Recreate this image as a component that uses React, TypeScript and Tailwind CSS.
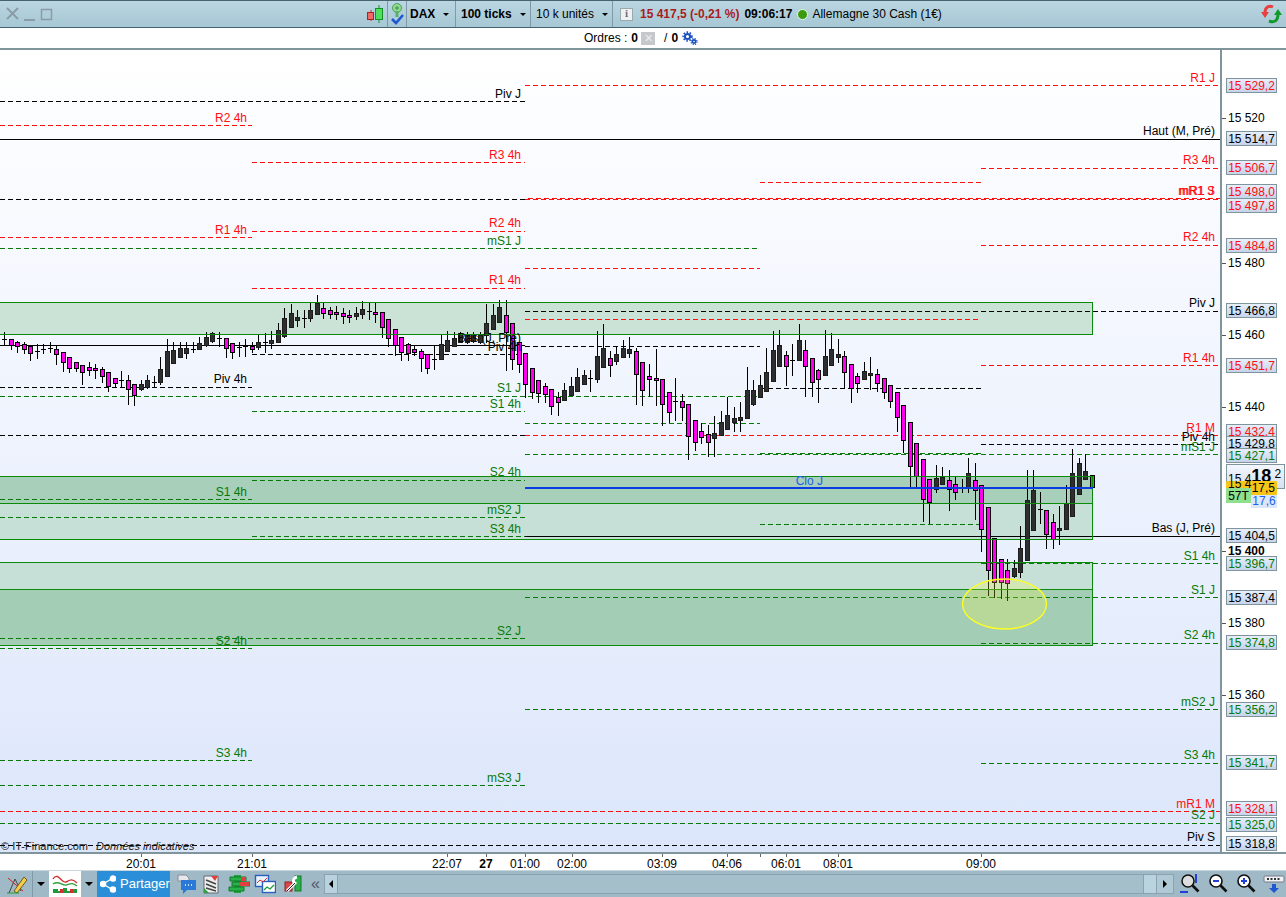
import type { ReactNode } from "react";

const RED = "#ff0f0f";
const GREEN = "#067a06";
const BLACK = "#000000";

// x1, x2, y, colour (page coordinates, the svg viewBox starts at y=50)
const dashed: [number, number, number, string][] = [
  [525, 1221, 85, RED],
  [0, 525, 101, BLACK],
  [0, 252, 125, RED],
  [252, 525, 162, RED],
  [981, 1221, 168, RED],
  [760, 981, 182, RED],
  [0, 525, 199, BLACK],
  [528, 1221, 198, RED],
  [525, 1221, 199, RED],
  [252, 525, 231, RED],
  [0, 252, 237, RED],
  [981, 1221, 245, RED],
  [0, 760, 248, GREEN],
  [525, 760, 268, RED],
  [252, 525, 288, RED],
  [525, 1221, 311, BLACK],
  [525, 981, 319, RED],
  [525, 760, 346, BLACK],
  [252, 525, 354, BLACK],
  [981, 1221, 365, RED],
  [0, 252, 387, BLACK],
  [760, 981, 388, BLACK],
  [0, 760, 396, GREEN],
  [252, 525, 411, GREEN],
  [525, 760, 423, GREEN],
  [0, 525, 435, BLACK],
  [525, 1221, 435, RED],
  [981, 1221, 444, BLACK],
  [525, 1221, 454, GREEN],
  [760, 981, 453, GREEN],
  [252, 525, 480, GREEN],
  [0, 252, 499, GREEN],
  [0, 525, 517, GREEN],
  [760, 981, 524, GREEN],
  [252, 525, 536, GREEN],
  [981, 1221, 563, GREEN],
  [760, 981, 589, GREEN],
  [525, 1221, 597, GREEN],
  [0, 525, 638, GREEN],
  [981, 1221, 643, GREEN],
  [0, 252, 648, GREEN],
  [525, 1221, 709, GREEN],
  [0, 252, 760, GREEN],
  [981, 1221, 763, GREEN],
  [0, 525, 785, GREEN],
  [0, 1221, 811, RED],
  [0, 1221, 823, GREEN],
  [0, 1221, 845, BLACK],
];

// right edge, baseline, text, colour
const labels: [number, number, string, string][] = [
  [521, 98, "Piv J", BLACK],
  [1215, 82, "R1 J", RED],
  [247, 122, "R2 4h", RED],
  [1215, 135, "Haut (M, Pré)", BLACK],
  [521, 159, "R3 4h", RED],
  [1215, 164, "R3 4h", RED],
  [1215, 195, "mR1 S", RED],
  [1214, 195, "mR1 J", RED],
  [521, 227, "R2 4h", RED],
  [247, 234, "R1 4h", RED],
  [521, 245, "mS1 J", GREEN],
  [1215, 241, "R2 4h", RED],
  [521, 284, "R1 4h", RED],
  [1215, 307, "Piv J", BLACK],
  [521, 342, "Bas (J, Pré)", BLACK],
  [521, 351, "Piv 4h", BLACK],
  [1215, 362, "R1 4h", RED],
  [247, 383, "Piv 4h", BLACK],
  [521, 392, "S1 J", GREEN],
  [521, 408, "S1 4h", GREEN],
  [1215, 432, "R1 M", RED],
  [1215, 441, "Piv 4h", BLACK],
  [1215, 451, "mS1 J", GREEN],
  [521, 476, "S2 4h", GREEN],
  [247, 496, "S1 4h", GREEN],
  [823, 485, "Clo J", "#2060e8"],
  [521, 514, "mS2 J", GREEN],
  [521, 533, "S3 4h", GREEN],
  [1215, 532, "Bas (J, Pré)", BLACK],
  [1215, 560, "S1 4h", GREEN],
  [1215, 594, "S1 J", GREEN],
  [521, 635, "S2 J", GREEN],
  [1215, 639, "S2 4h", GREEN],
  [247, 645, "S2 4h", GREEN],
  [1215, 706, "mS2 J", GREEN],
  [247, 757, "S3 4h", GREEN],
  [1215, 759, "S3 4h", GREEN],
  [521, 782, "mS3 J", GREEN],
  [1215, 808, "mR1 M", RED],
  [1215, 819, "S2 J", GREEN],
  [1215, 841, "Piv S", BLACK],
];

// high, body top, body bottom, low, m = magenta / k = black / d = doji
const candles: [number, number, number, number, string][] = [
  [332, 339, 340, 346, "d"], [339, 339, 345, 350, "m"], [341, 342, 346, 353, "m"], [342, 344, 349, 354, "m"],
  [346, 346, 353, 361, "m"], [344, 351, 352, 359, "d"], [344, 349, 350, 354, "d"], [342, 348, 349, 353, "d"],
  [346, 349, 354, 365, "m"], [352, 352, 362, 372, "m"], [357, 357, 368, 373, "m"], [362, 362, 368, 372, "m"],
  [365, 365, 372, 385, "m"], [362, 367, 370, 376, "m"], [364, 368, 370, 379, "m"], [367, 369, 376, 383, "m"],
  [372, 372, 386, 392, "m"], [378, 378, 383, 387, "m"], [371, 380, 381, 387, "d"], [375, 380, 389, 405, "m"],
  [384, 384, 395, 406, "m"], [380, 384, 389, 391, "k"], [375, 380, 387, 389, "k"], [376, 382, 383, 388, "d"],
  [357, 369, 382, 385, "k"], [339, 351, 376, 377, "k"], [342, 350, 363, 364, "k"], [342, 348, 357, 358, "k"],
  [342, 348, 353, 359, "k"], [342, 349, 350, 353, "d"], [337, 343, 349, 350, "k"], [332, 337, 345, 347, "k"],
  [332, 333, 341, 343, "k"], [332, 338, 339, 347, "d"], [338, 338, 348, 358, "m"], [343, 343, 352, 359, "m"],
  [342, 347, 348, 357, "d"], [339, 346, 347, 357, "d"], [342, 346, 349, 353, "m"], [335, 342, 347, 350, "k"],
  [333, 342, 343, 353, "d"], [331, 340, 343, 349, "k"], [323, 330, 342, 343, "k"], [308, 318, 336, 338, "k"],
  [304, 313, 327, 328, "k"], [310, 317, 320, 327, "k"], [310, 318, 319, 328, "d"], [302, 310, 318, 322, "k"],
  [295, 303, 314, 315, "k"], [303, 308, 313, 319, "m"], [307, 310, 314, 319, "m"], [306, 312, 314, 320, "m"],
  [308, 313, 316, 324, "m"], [310, 315, 317, 323, "m"], [307, 313, 316, 320, "k"], [301, 309, 314, 319, "k"],
  [303, 311, 312, 320, "d"], [303, 312, 314, 323, "m"], [312, 312, 327, 338, "m"], [319, 319, 338, 347, "m"],
  [329, 329, 345, 356, "m"], [337, 337, 352, 361, "m"], [343, 344, 353, 361, "m"], [345, 349, 352, 356, "m"],
  [349, 351, 358, 372, "m"], [354, 354, 368, 374, "m"], [345, 359, 360, 370, "d"], [335, 344, 359, 360, "k"],
  [331, 340, 351, 352, "k"], [332, 338, 346, 347, "k"], [332, 333, 342, 343, "k"], [332, 335, 342, 344, "k"],
  [332, 334, 341, 343, "k"], [332, 335, 342, 344, "k"], [304, 323, 335, 343, "k"], [304, 315, 329, 330, "k"],
  [300, 307, 322, 323, "k"], [300, 315, 332, 371, "m"], [323, 323, 359, 370, "m"], [342, 342, 364, 373, "m"],
  [353, 353, 384, 398, "m"], [368, 368, 392, 399, "m"], [380, 380, 393, 403, "m"], [383, 386, 394, 403, "m"],
  [389, 389, 406, 415, "m"], [392, 397, 402, 416, "m"], [383, 390, 400, 401, "k"], [377, 386, 395, 396, "k"],
  [368, 377, 391, 392, "k"], [370, 375, 384, 385, "k"], [370, 378, 379, 392, "d"], [331, 356, 379, 383, "k"],
  [324, 348, 367, 368, "k"], [351, 358, 365, 377, "m"], [346, 354, 361, 365, "k"], [340, 348, 357, 358, "k"],
  [337, 349, 353, 358, "k"], [348, 351, 374, 405, "m"], [362, 362, 390, 406, "m"], [364, 376, 379, 397, "m"],
  [349, 378, 380, 406, "m"], [379, 379, 404, 426, "m"], [392, 392, 412, 423, "m"], [378, 401, 402, 421, "d"],
  [394, 401, 407, 421, "m"], [404, 404, 436, 460, "m"], [420, 420, 442, 451, "m"], [423, 431, 437, 444, "m"],
  [425, 434, 442, 457, "m"], [416, 433, 438, 457, "k"], [411, 422, 435, 436, "k"], [397, 415, 429, 430, "k"],
  [407, 418, 422, 432, "k"], [402, 417, 420, 432, "k"], [367, 390, 418, 419, "k"], [380, 390, 404, 406, "k"],
  [375, 385, 397, 398, "k"], [348, 372, 391, 392, "k"], [331, 350, 381, 382, "k"], [330, 345, 366, 367, "k"],
  [351, 355, 366, 386, "m"], [344, 360, 361, 376, "d"], [324, 340, 360, 361, "k"], [340, 350, 366, 397, "m"],
  [358, 358, 382, 397, "m"], [369, 370, 379, 403, "m"], [330, 356, 375, 376, "k"], [333, 349, 365, 366, "k"],
  [339, 354, 357, 363, "k"], [351, 356, 372, 389, "m"], [364, 364, 388, 403, "m"], [373, 376, 383, 393, "m"],
  [362, 371, 379, 380, "k"], [357, 373, 375, 390, "k"], [369, 374, 383, 392, "m"], [378, 378, 392, 399, "m"],
  [385, 385, 401, 408, "m"], [392, 392, 417, 432, "m"], [405, 405, 440, 453, "m"], [422, 422, 466, 488, "m"],
  [443, 443, 476, 488, "m"], [459, 459, 499, 522, "m"], [479, 479, 502, 524, "m"], [465, 478, 489, 493, "k"],
  [467, 477, 484, 485, "k"], [470, 480, 489, 511, "m"], [477, 484, 492, 500, "m"], [479, 488, 489, 493, "d"],
  [458, 473, 488, 493, "k"], [463, 480, 490, 520, "m"], [485, 485, 529, 552, "m"], [507, 507, 570, 596, "m"],
  [538, 538, 582, 598, "m"], [559, 559, 582, 599, "m"], [559, 570, 583, 601, "m"], [560, 568, 576, 578, "k"],
  [526, 548, 572, 578, "k"], [470, 500, 560, 561, "k"], [470, 490, 530, 531, "k"], [492, 509, 510, 524, "d"],
  [510, 510, 534, 549, "m"], [514, 522, 539, 549, "m"], [506, 528, 530, 545, "k"], [485, 503, 529, 530, "k"],
  [449, 473, 516, 517, "k"], [458, 463, 494, 495, "k"], [454, 471, 479, 480, "k"], [475, 475, 487, 488, "g"],
];

// centre y, text, colour
const tags: [number, string, string][] = [
  [85, "15 529,2", RED],
  [138, "15 514,7", BLACK],
  [167, "15 506,7", RED],
  [191, "15 498,0", RED],
  [205, "15 497,8", RED],
  [245, "15 484,8", RED],
  [310, "15 466,8", BLACK],
  [365, "15 451,7", RED],
  [431, "15 432,4", RED],
  [443, "15 429,8", BLACK],
  [455, "15 427,1", GREEN],
  [535, "15 404,5", BLACK],
  [563, "15 396,7", GREEN],
  [597, "15 387,4", BLACK],
  [642, "15 374,8", GREEN],
  [709, "15 356,2", GREEN],
  [762, "15 341,7", GREEN],
  [808, "15 328,1", RED],
  [824, "15 325,0", GREEN],
  [843, "15 318,8", BLACK],
];

const ticks: [number, string][] = [
  [118, "15 520"],
  [263, "15 480"],
  [335, "15 460"],
  [407, "15 440"],
  [623, "15 380"],
  [695, "15 360"],
];

const times: [number, string, boolean][] = [
  [141, "20:01", false],
  [252, "21:01", false],
  [447, "22:07", false],
  [486, "27", true],
  [525, "01:00", false],
  [572, "02:00", false],
  [662, "03:09", false],
  [727, "04:06", false],
  [760, "", false],
  [786, "06:01", false],
  [838, "08:01", false],
  [981, "09:00", false],
];

function Caret() {
  return <span className="ml-2 h-0 w-0 border-x-[3px] border-t-[3px] border-x-transparent border-t-black" />;
}

function Chart() {
  return (
    <svg viewBox="0 50 1221 802" width={1221} height={802} className="block" fontFamily="'Liberation Sans', Arial, sans-serif" fontSize={12}>
      <g shapeRendering="crispEdges">
        <rect x={0} y={302} width={1092} height={32} fill="#cbe3d6" />
        <rect x={0} y={476} width={1092} height={27} fill="#a7cfb9" />
        <rect x={0} y={503} width={1092} height={37} fill="#c6e0d8" />
        <rect x={0} y={562} width={1092} height={27} fill="#c6e0d8" />
        <rect x={0} y={589} width={1092} height={56} fill="#a3cdb5" />
        {dashed.map(([x1, x2, y, c], i) => (
          <line key={i} x1={x1} x2={x2} y1={y + 0.5} y2={y + 0.5} stroke={c} strokeDasharray="5 3" />
        ))}
        <line x1={0} x2={1221} y1={139.5} y2={139.5} stroke="#000" />
        <line x1={0} x2={525} y1={345.5} y2={345.5} stroke="#000" />
        <line x1={525} x2={1221} y1={536.5} y2={536.5} stroke="#000" />
        {candles.map(([high, top, bottom, low, kind], i) => {
          const x = Math.round(4 + 6.515 * i);
          const fill = kind === "m" ? "#ff00ee" : kind === "g" ? "#3d9a5c" : "#2e2e2e";
          return (
            <g key={i}>
              <rect x={x} y={high} width={1} height={low - high} fill="#000" />
              {kind === "d" ? (
                <rect x={x - 2} y={top} width={5} height={1} fill="#000" />
              ) : (
                <rect x={x - 1.5} y={top + 0.5} width={4} height={bottom - top} fill={fill} stroke={kind === "k" ? "#1c1c1c" : "#000"} />
              )}
            </g>
          );
        })}
        <g fill="none" stroke="#0b8a0b">
          <rect x={-1} y={302.5} width={1093.5} height={32} />
          <rect x={-1} y={476.5} width={1093.5} height={63} />
          <rect x={-1} y={562.5} width={1093.5} height={83} />
          <line x1={0} x2={1092} y1={503.5} y2={503.5} />
          <line x1={0} x2={1092} y1={589.5} y2={589.5} />
        </g>
        <rect x={525} y={487} width={568} height={2} fill="#0a3de0" />
      </g>
      <ellipse cx={1004.5} cy={604} rx={42} ry={25} fill="#ffff30" fillOpacity={0.22} stroke="#ffff20" strokeWidth={1.3} />
      {labels.map(([x, y, text, c], i) => (
        <text key={i} x={x} y={y} textAnchor="end" fill={c}>
          {text}
        </text>
      ))}
      <text x={1} y={850} fill="#222" fontSize={11}>
        © IT-Finance.com
      </text>
      <text x={96} y={850} fill="#222" fontSize={11} fontStyle="italic">
        Données indicatives
      </text>
    </svg>
  );
}

function PriceAxis() {
  return (
    <div className="relative h-[802px] flex-1 border-l-2 border-[#7f959b] bg-white text-[12px] leading-none">
      {ticks.map(([y, t]) => (
        <div key={t} className="absolute left-0 flex items-center text-black" style={{ top: y - 50 - 6 }}>
          <span className="mr-[2px] h-px w-[4px] bg-[#555]" />
          <span>{t}</span>
        </div>
      ))}
      <div className="absolute left-0 flex items-center font-bold text-black" style={{ top: 551 - 50 - 6 }}>
        <span className="mr-[2px] h-px w-[4px] bg-[#555]" />
        <span>15 400</span>
      </div>
      {tags.map(([y, t, c]) => (
        <div
          key={y}
          className="absolute left-[4px] flex h-[15px] w-[51px] items-center justify-center border border-[#7f959b] bg-linear-to-b from-[#e8eefb] to-[#c6d4ec]"
          style={{ top: y - 50 - 7, color: c }}
        >
          {t}
        </div>
      ))}
      {/* current price stack */}
      <div className="absolute left-[4px] top-[414px] flex h-[25px] w-[59px] items-end border border-[#7f959b] bg-linear-to-b from-[#f4f7fd] to-[#d5dff0] pb-[3px] pl-[1px] text-black">
        <span>15 4</span>
        <span className="text-[18px] font-bold">18</span>
        <span className="ml-[3px] self-start pt-[3px]">2</span>
      </div>
      <div className="absolute left-[29px] top-[444px] flex h-[14px] w-[26px] items-center justify-center bg-[#dce6fb] text-[#2060e8]">17,6</div>
      <div className="absolute left-[4px] top-[431px] flex h-[14px] w-[51px] items-start justify-between overflow-hidden rounded-[1px] bg-[#f5c518] pl-[2px] pr-[2px] text-black">
        <span className="-mt-[3px]">15 4</span>
        <span className="mt-[1px]">17,5</span>
      </div>
      <div className="absolute left-[4px] top-[438px] flex h-[15px] w-[25px] items-center justify-center bg-[#8fe08f] text-black">57T</div>
    </div>
  );
}

function TopBar() {
  return (
    <div className="flex h-[28px] items-center border-y border-[#46626f] bg-linear-to-b from-[#bad6e2] to-[#a6c7d4] text-[12px] text-black">
      <svg width={54} height={16} viewBox="0 0 54 16" className="ml-[5px]" fill="none" stroke="#8b9ca6">
        <path d="M2 2l11 11M13 2L2 13" strokeWidth={2} />
        <path d="M19 14h11" strokeWidth={2} />
        <rect x={36.5} y={3.5} width={10} height={10} strokeWidth={1.5} />
      </svg>
      <svg width={20} height={20} viewBox="0 0 20 20" className="ml-[306px]">
        <path d="M6 6v11" stroke="#c03030" />
        <path d="M14 1v18" stroke="#1a9a30" />
        <rect x={2.5} y={8.5} width={6} height={7} fill="#ef6a6a" stroke="#b02020" />
        <rect x={10.5} y={4.5} width={7} height={11} fill="#4fe060" stroke="#189028" />
      </svg>
      <span className="ml-[2px] h-full w-px bg-[#7f9aa6]" />
      <svg width={18} height={24} viewBox="0 0 18 24">
        <circle cx={9} cy={6} r={4.5} fill="#8fdc8f" stroke="#4f9f5f" />
        <circle cx={9} cy={6} r={1.8} fill="#4f9f5f" />
        <path d="M9 9v6" stroke="#5cae6c" strokeWidth={3} />
        <path d="M4 17l4 4 7-8" fill="none" stroke="#1f58d0" strokeWidth={2.6} />
      </svg>
      <span className="h-full w-px bg-[#7f9aa6]" />
      <div className="flex h-full w-[48px] items-center pl-[3px] font-bold">
        DAX
        <Caret />
      </div>
      <span className="h-full w-px bg-[#7f9aa6]" />
      <div className="flex h-full w-[74px] items-center pl-[5px] font-bold">
        100 ticks
        <Caret />
      </div>
      <span className="h-full w-px bg-[#7f9aa6]" />
      <div className="flex h-full w-[81px] items-center pl-[5px]">
        10 k unités
        <Caret />
      </div>
      <span className="h-full w-px bg-[#7f9aa6]" />
      <span className="ml-[7px] flex h-[13px] w-[13px] items-center justify-center border border-[#9aa] bg-[#eef1f2] font-serif text-[10px] font-bold leading-none text-[#667]">
        i
      </span>
      <span className="ml-[7px] font-bold text-[#a81c1c]">15 417,5 (-0,21 %)</span>
      <span className="ml-[5px] font-bold">09:06:17</span>
      <span className="ml-[5px] h-[11px] w-[11px] rounded-full border border-[#dfe] bg-[#3f9a10]" />
      <span className="ml-[4px]">Allemagne 30 Cash (1€)</span>
      <svg width={22} height={20} viewBox="0 0 22 20" className="ml-auto mr-[3px]" fill="none">
        <path d="M12 3C8 1 4 3 4 9" stroke="#e84040" strokeWidth={3} />
        <path d="M0 8h8l-4 6z" fill="#e84040" />
        <path d="M8 17c5 2 9 0 9-7" stroke="#0f9a2a" strokeWidth={3} />
        <path d="M13 11h8l-4-6z" fill="#0f9a2a" />
      </svg>
    </div>
  );
}

function OrdersBar() {
  return (
    <div className="flex h-[22px] items-center border-b-2 border-[#7f959b] bg-white pl-[584px] text-[12px] text-black">
      <span>Ordres :</span>
      <b className="ml-[4px]">0</b>
      <span className="ml-[3px] flex h-[13px] w-[14px] items-center justify-center bg-[#c4c8ca] text-[11px] leading-none text-[#eee]">✕</span>
      <span className="ml-[9px]">/</span>
      <b className="ml-[4px]">0</b>
      <svg width={16} height={15} viewBox="0 0 16 15" className="ml-[4px]" fill="none" stroke="#1a50c0">
        <circle cx={5.5} cy={5.5} r={2.6} strokeWidth={2} />
        <circle cx={5.5} cy={5.5} r={4.4} strokeWidth={1.6} strokeDasharray="1.6 1.6" />
        <circle cx={12} cy={10.5} r={1.6} strokeWidth={1.6} />
        <circle cx={12} cy={10.5} r={3} strokeWidth={1.2} strokeDasharray="1.2 1.2" />
      </svg>
    </div>
  );
}

function TimeAxis() {
  return (
    <div className="relative h-[18px] border-t-2 border-[#7f959b] bg-white text-[12px] leading-none text-black">
      {times.map(([x, t, bold]) => (
        <div key={x} className="absolute top-0 flex w-[40px] flex-col items-center" style={{ left: x - 20 }}>
          <span className="h-[3px] w-px bg-[#666]" />
          <span className={bold ? "mt-[1px] font-bold" : "mt-[1px]"}>{t}</span>
        </div>
      ))}
    </div>
  );
}

function Ico({ children, className }: { children: ReactNode; className?: string }) {
  return (
    <svg width={22} height={22} viewBox="0 0 22 22" fill="none" className={className}>
      {children}
    </svg>
  );
}

function Loupe({ sign }: { sign: string }) {
  return (
    <Ico>
      <circle cx={9} cy={8} r={6} fill="#fff" stroke="#111" strokeWidth={1.6} />
      <path d="M13.5 12.5l6 6" stroke="#111" strokeWidth={2.6} />
      <path d={sign} stroke="#1f3fd8" strokeWidth={2} />
    </Ico>
  );
}

function BottomBar() {
  return (
    <div className="flex h-[27px] items-center border-t border-[#c9d6dc] bg-[#9fbac6] text-[13px] text-white">
      <Ico className="ml-[6px]">
        <path d="M3 20L9 6l6 12" stroke="#444" />
        <path d="M2 5l15 13" stroke="#d02020" />
        <path d="M8 18L18 4l3 3-10 13z" fill="#f4cd4a" stroke="#6a5a20" />
        <path d="M1 20h12" stroke="#2a9a2a" />
      </Ico>
      <span className="ml-[4px] h-full w-px bg-[#7f9aa6]" />
      <span className="ml-[4px] h-0 w-0 border-x-[4px] border-t-[4px] border-x-transparent border-t-black" />
      <div className="ml-[4px] flex h-full w-[32px] items-center justify-center bg-white">
        <svg width={28} height={24} viewBox="0 0 28 24" fill="none">
          <path d="M2 7c5-8 9 5 13 3s6-4 11 1" stroke="#d03030" strokeWidth={1.4} />
          <path d="M2 12c6-4 9 2 13 1s6-3 11 1" stroke="#30a040" strokeWidth={1.4} />
          <path d="M2 21v-4h5v2h5v-3h4v3h5v-2h5v4z" fill="#1f9a3a" />
          <rect x={9} y={17} width={3} height={4} fill="#d03030" />
          <rect x={19} y={17} width={3} height={4} fill="#d03030" />
        </svg>
      </div>
      <span className="ml-[4px] h-0 w-0 border-x-[4px] border-t-[4px] border-x-transparent border-t-black" />
      <div className="ml-[4px] flex h-full w-[73px] items-center gap-[4px] bg-[#2a8fd8] pl-[3px]">
        <svg width={16} height={18} viewBox="0 0 16 18" fill="none" stroke="#fff" strokeWidth={1.4}>
          <path d="M3 9l10-6M3 9l10 6" />
          <circle cx={3} cy={9} r={2.6} fill="#fff" />
          <circle cx={13} cy={3.5} r={2.6} fill="#fff" />
          <circle cx={13} cy={14.5} r={2.6} fill="#fff" />
        </svg>
        Partager
      </div>
      <Ico className="ml-[6px]">
        <path d="M2 2h8l3 3v3H2z" fill="#e4e8ea" stroke="#889" />
        <path d="M5 7h15v10h-9l-4 4v-4H5z" fill="#2a78d8" />
        <path d="M9 12h1M12 12h1M15 12h1" stroke="#fff" strokeWidth={1.5} />
      </Ico>
      <Ico className="ml-[2px]">
        <path d="M4 3h14v17H4z" fill="#eef0f0" stroke="#667" />
        <path d="M6 7l10 4M6 11l10 4M6 15l10 3" stroke="#444" strokeWidth={1.5} />
        <path d="M11 3h7l-3 5z" fill="#e04040" />
        <path d="M4 20v-5l5 5z" fill="#30a040" />
      </Ico>
      <Ico className="ml-[6px]">
        <rect x={6} y={2} width={7} height={18} fill="#1fa33a" />
        <path d="M2 4h16v4H2zM4 9h18v4H4zM1 14h15v4H1z" fill="#2ab04a" stroke="#0f7a28" />
        <rect x={12} y={9} width={9} height={4} fill="#e04040" />
        <rect x={13} y={4} width={5} height={4} fill="#e04040" />
      </Ico>
      <Ico className="ml-[4px]">
        <rect x={1.5} y={2.5} width={13} height={11} fill="#eaf2fb" stroke="#2a5fc0" strokeWidth={1.4} />
        <rect x={8.5} y={8.5} width={13} height={11} fill="#fff" stroke="#2a5fc0" strokeWidth={1.4} />
        <path d="M3 10l3-3 3 2 4-4" stroke="#d03030" />
        <path d="M10 17l3-3 3 2 4-4" stroke="#1f9a3a" strokeWidth={1.3} />
      </Ico>
      <Ico className="ml-[6px]">
        <rect x={13} y={3} width={6} height={15} fill="#2ab04a" stroke="#0f7a28" />
        <rect x={3} y={9} width={7} height={9} fill="#d84a4a" stroke="#902020" />
        <path d="M5 18l9-9M15 4a4 4 0 00-3 6" stroke="#fff" strokeWidth={3} />
        <path d="M5 18l8-8" stroke="#222" strokeWidth={1} />
      </Ico>
      <span className="ml-[4px] w-[15px] text-center text-[16px] leading-none text-[#556]">«</span>
      <div className="ml-[1px] flex h-[20px] w-[850px] items-stretch border border-[#8aa3ae] bg-[#a5bfca]">
        <span className="flex w-[13px] items-center justify-center border-r border-[#8aa3ae] bg-[#b9d3de]">
          <span className="h-0 w-0 border-y-[4px] border-r-[4px] border-y-transparent border-r-black" />
        </span>
        <span className="ml-auto w-[14px] border-x border-[#8aa3ae] bg-[#bad4df]" />
        <span className="flex w-[16px] items-center justify-center bg-[#b0cad5]">
          <span className="h-0 w-0 border-y-[4px] border-l-[4px] border-y-transparent border-l-black" />
        </span>
      </div>
      <Ico className="ml-[5px]">
        <circle cx={9} cy={8} r={6} fill="#ddd" stroke="#111" strokeWidth={1.5} />
        <path d="M13.5 12.5l6 6" stroke="#111" strokeWidth={2.6} />
        <path d="M1 19h8M17 1v9" stroke="#1f3fd8" strokeWidth={2} />
      </Ico>
      <span className="w-[6px]" />
      <Loupe sign="M6 8h6" />
      <span className="w-[6px]" />
      <Loupe sign="M6 8h6M9 5v6" />
      <span className="w-[6px]" />
      <Ico>
        <rect x={1} y={3} width={20} height={6} rx={1} fill="#eef2f4" stroke="#778" />
        <path d="M4 6h14" stroke="#333" strokeWidth={2} strokeDasharray="2 1.5" />
        <path d="M9 11h4v4h3l-5 5-5-5h3z" fill="#1f58d0" />
      </Ico>
    </div>
  );
}

export default function App() {
  return (
    <div className="flex h-[897px] w-[1286px] flex-col overflow-hidden bg-white font-['Liberation_Sans',Arial,sans-serif]">
      <TopBar />
      <OrdersBar />
      <div className="flex">
        <div className="h-[802px] w-[1220px] shrink-0 overflow-hidden bg-linear-to-b from-white to-[#dce6fb]">
          <Chart />
        </div>
        <PriceAxis />
      </div>
      <TimeAxis />
      <BottomBar />
    </div>
  );
}
